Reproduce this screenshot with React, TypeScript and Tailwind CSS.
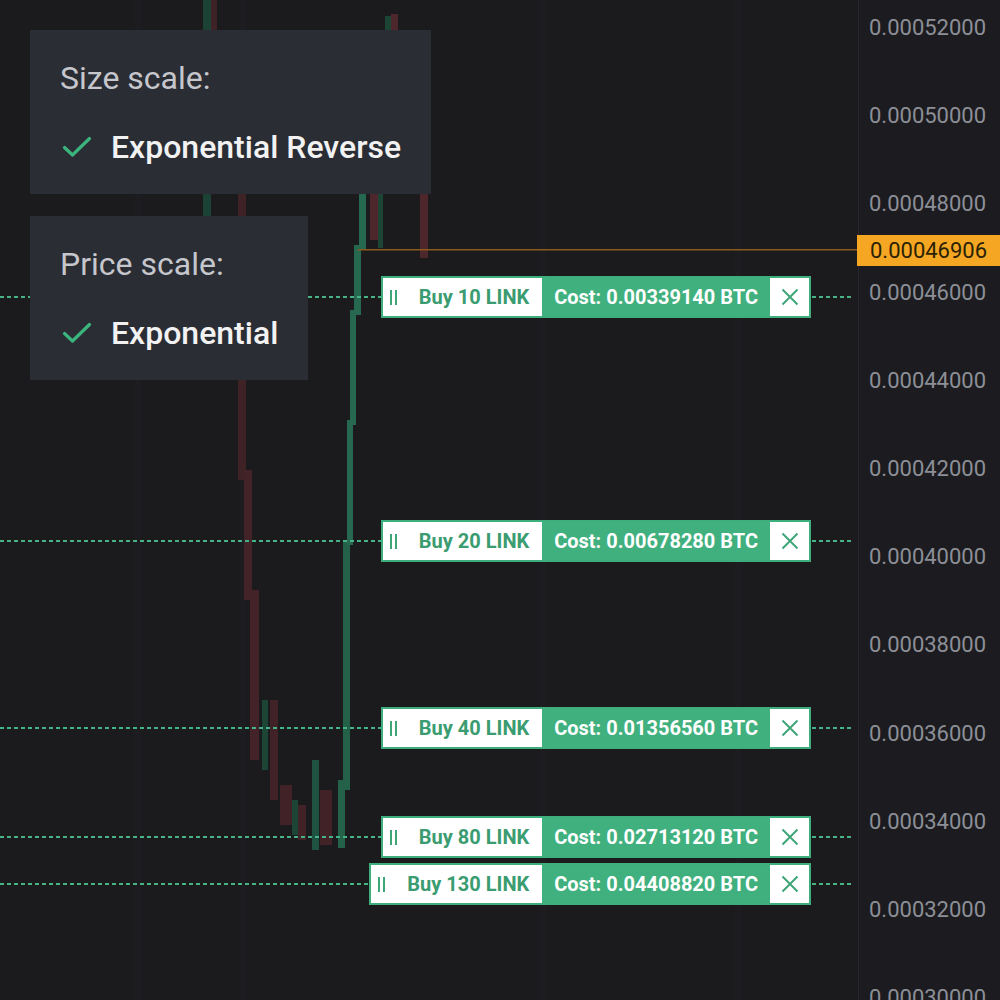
import React from "react";

type Order = { qty: number; cost: string; y: number };

const orders: Order[] = [
  { qty: 10, cost: "0.00339140", y: 297 },
  { qty: 20, cost: "0.00678280", y: 541 },
  { qty: 40, cost: "0.01356560", y: 728 },
  { qty: 80, cost: "0.02713120", y: 837 },
  { qty: 130, cost: "0.04408820", y: 884 },
];

const axisLabels = [
  "0.00052000",
  "0.00050000",
  "0.00048000",
  "0.00046000",
  "0.00044000",
  "0.00042000",
  "0.00040000",
  "0.00038000",
  "0.00036000",
  "0.00034000",
  "0.00032000",
  "0.00030000",
];

// [x, y1, y2, width, colour]
const candles: Array<[number, number, number, number, string]> = [
  [203, 0, 216, 8, "#1b4234"],
  [211, 0, 30, 6, "#3e2226"],
  [238, 180, 480, 8, "#3e2226"],
  [244, 470, 600, 8, "#432327"],
  [250, 590, 760, 9, "#432327"],
  [262, 700, 770, 6, "#1c4536"],
  [270, 700, 800, 8, "#412226"],
  [280, 785, 825, 12, "#412226"],
  [292, 800, 835, 6, "#1c4536"],
  [298, 805, 840, 8, "#412226"],
  [312, 760, 850, 7, "#1f5241"],
  [320, 790, 845, 12, "#412226"],
  [338, 780, 848, 7, "#236149"],
  [343, 540, 790, 7, "#236149"],
  [347, 420, 545, 6, "#266850"],
  [350, 310, 425, 6, "#266850"],
  [354, 245, 315, 7, "#266850"],
  [359, 193, 250, 7, "#266850"],
  [370, 193, 240, 8, "#4d272b"],
  [378, 193, 248, 5, "#1c4536"],
  [420, 193, 258, 8, "#4d272b"],
  [385, 16, 32, 6, "#1c4536"],
  [391, 14, 32, 7, "#4d272b"],
];

function Check() {
  return (
    <svg width="30" height="22" viewBox="0 0 30 22" fill="none" className="shrink-0">
      <path d="M2.5 11.5 L10.5 19 L27.5 2.5" stroke="#3cb47e" strokeWidth="3.2" strokeLinecap="round" strokeLinejoin="round" />
    </svg>
  );
}

function ScalePopup({ label, value }: { label: string; value: string }) {
  return (
    <div className="flex flex-col gap-[31px] bg-[#2a2d34] pb-[27px] pl-[30px] pr-[30px] pt-[30px]">
      <div className="h-[36px] text-[32px] leading-[36px] text-[#c6c7cc]">{label}</div>
      <div className="flex h-[40px] items-center gap-[19px] pl-[2px]">
        <Check />
        <span className="text-[32px] font-medium leading-[40px] text-[#f2f2f2]">{value}</span>
      </div>
    </div>
  );
}

function OrderLabel({ order }: { order: Order }) {
  return (
    <>
      <div
        className="absolute left-0 right-[6px] h-[2px] bg-[repeating-linear-gradient(90deg,#45b386_0_4px,transparent_4px_7px)]"
        style={{ top: order.y - 1 }}
      />
      <div
        className="absolute right-[47px] flex h-[42px] border-2 border-[#3fae7d] bg-white text-[20px] font-bold leading-none"
        style={{ top: order.y - 21 }}
      >
        <div className="flex items-center pl-[7px] pr-[13px]">
          <div className="flex h-[15px] gap-[3px]">
            <span className="w-[2px] bg-[#3fa678]" />
            <span className="w-[2px] bg-[#3fa678]" />
          </div>
          <span className="ml-[22px] text-[#3a9c70]">Buy {order.qty} LINK</span>
        </div>
        <div className="flex items-center bg-[#3fb07e] px-[12px] text-white">Cost: {order.cost} BTC</div>
        <div className="flex w-[39px] items-center justify-center">
          <svg width="18" height="18" viewBox="0 0 18 18" fill="none">
            <path d="M1.5 1.5 L16.5 16.5 M16.5 1.5 L1.5 16.5" stroke="#3fa678" strokeWidth="2" />
          </svg>
        </div>
      </div>
    </>
  );
}

export default function App() {
  return (
    <div className="flex h-[1000px] w-[1000px] overflow-hidden bg-[#1b1b1e] font-['Roboto',sans-serif]">
      {/* Chart */}
      <div className="relative h-full w-[858px]">
        <svg className="absolute inset-0" width="858" height="1000">
          {[135, 240, 540, 735].map((x) => (
            <rect key={x} x={x} y={0} width={6} height={1000} fill="#1d1d21" />
          ))}
          {candles.map(([x, y1, y2, w, c], i) => (
            <rect key={i} x={x} y={y1} width={w} height={y2 - y1} fill={c} />
          ))}
          <rect x={358} y={249} width={500} height={1.5} fill="#8a5a1c" />
        </svg>

        {orders.map((order) => (
          <OrderLabel key={order.qty} order={order} />
        ))}

        <div className="absolute left-[30px] top-[30px] flex flex-col items-start gap-[22px]">
          <ScalePopup label="Size scale:" value="Exponential Reverse" />
          <ScalePopup label="Price scale:" value="Exponential" />
        </div>
      </div>

      {/* Price axis */}
      <div className="relative h-full flex-1 border-l border-[#26262b] bg-[#1c1c20]">
        {axisLabels.map((label, i) => (
          <div
            key={label}
            className="absolute left-[10px] text-[22px] leading-[28px] text-[#8d8f97]"
            style={{ top: 28 + i * 88.2 - 14 }}
          >
            {label}
          </div>
        ))}
        <div className="absolute left-[-2px] right-0 top-[235px] flex h-[31px] items-center bg-[#f5a623] pl-[13px] text-[22px] text-[#2b2204]">
          0.00046906
        </div>
      </div>
    </div>
  );
}
